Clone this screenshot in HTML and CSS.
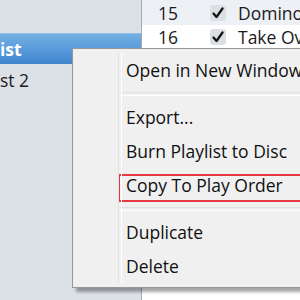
FILE: index.html
```html
<!DOCTYPE html>
<html lang="en">
<head>
	<meta charset="UTF-8">
	<title>Playlist menu</title>
	<link rel="stylesheet" href="styles.css">
</head>
<body>
	<div class="app">
		<aside class="sources">
			<div class="src"></div>
			<div class="src sel">ist</div>
			<div class="src">st 2</div>
		</aside>
		<main class="tracks">
			<div class="row alt"><span class="num">15</span><span class="chk"><svg width="12" height="12" viewBox="0 0 12 12"><path d="M1.5 6.5 L4.5 10 L10.5 1.5" fill="none" stroke="#111" stroke-width="2.2" stroke-linecap="round" stroke-linejoin="round"/></svg></span><span class="name">Domino</span></div>
			<div class="row"><span class="num">16</span><span class="chk"><svg width="12" height="12" viewBox="0 0 12 12"><path d="M1.5 6.5 L4.5 10 L10.5 1.5" fill="none" stroke="#111" stroke-width="2.2" stroke-linecap="round" stroke-linejoin="round"/></svg></span><span class="name">Take Over</span></div>
			<div class="row alt"><span class="num">17</span></div>
			<div class="row"><span class="num">18</span></div>
		</main>
	</div>

	<ul class="menu">
		<li>Open in New Window</li>
		<li class="sep"></li>
		<li>Export...</li>
		<li>Burn Playlist to Disc</li>
		<li class="mark">Copy To Play Order</li>
		<li class="sep"></li>
		<li>Duplicate</li>
		<li>Delete</li>
	</ul>
</body>
</html>
```

FILE: styles.css
```css
*{
	padding:0;margin:0;
	list-style:none;
	box-sizing:border-box;
}
html,body{
	width:100%;
	height:100%;
	overflow:hidden;
}
body{
	font-family:"Open Sans","Noto Sans",sans-serif;
	font-size:17.5px;
	color:#1a1a1a;
	background:#fff;
	position:relative;
}
.app{
	display:flex;
	height:100%;
}
.sources{
	width:142px;
	flex:none;
	background:#dce1e8;
	border-right:1px solid #a6acb3;
}
.src{
	height:32px;
	line-height:32px;
	white-space:nowrap;
	overflow:hidden;
}
.src:first-child{height:33px;}
.src.sel{
	height:31px;
	line-height:31px;
	color:#fff;
	font-weight:bold;
	background:linear-gradient(#74aee3,#5a9bdb 50%,#3f84cd);
	border-top:1px solid #8fbde8;
}
.tracks{
	flex:1;
	overflow:hidden;
}
.row{
	height:24px;
	display:flex;
	align-items:center;
	white-space:nowrap;
	overflow:hidden;
}
.row.alt{background:#edf0f4;}
.row:first-child{height:25px;}
.num{
	width:68px;
	padding-left:16px;
	flex:none;
}
.chk{
	width:16px;
	height:16px;
	border-radius:3px;
	background:#dcdfe3;
	display:flex;
	align-items:center;
	justify-content:center;
	flex:none;
}
.name{padding-left:12px;}

.menu{
	position:absolute;
	left:72px;
	top:48px;
	width:240px;
	padding:4px 2px;
	background:#f0f0f0;
	border:1px solid #979797;
	box-shadow:4px 4px 3px rgba(0,0,0,.35);
}
.menu li{
	position:relative;
	height:34px;
	line-height:34px;
	padding-left:51px;
	white-space:nowrap;
	color:#111;
}
.menu li::after{
	content:'';
	position:absolute;
	left:43px;
	top:0;
	bottom:0;
	width:2px;
	border-left:1px solid #e2e3e3;
	border-right:1px solid #fff;
}
.menu li.sep{
	height:13px;
}
.menu li.sep::before{
	content:'';
	position:absolute;
	left:45px;
	right:0;
	top:5px;
	height:2px;
	border-top:1px solid #e0e0e0;
	border-bottom:1px solid #fff;
}
.menu li.mark::before{
	content:'';
	position:absolute;
	left:43px;
	top:6px;
	width:183px;
	height:24px;
	border:2px solid #e4393f;
}
```
